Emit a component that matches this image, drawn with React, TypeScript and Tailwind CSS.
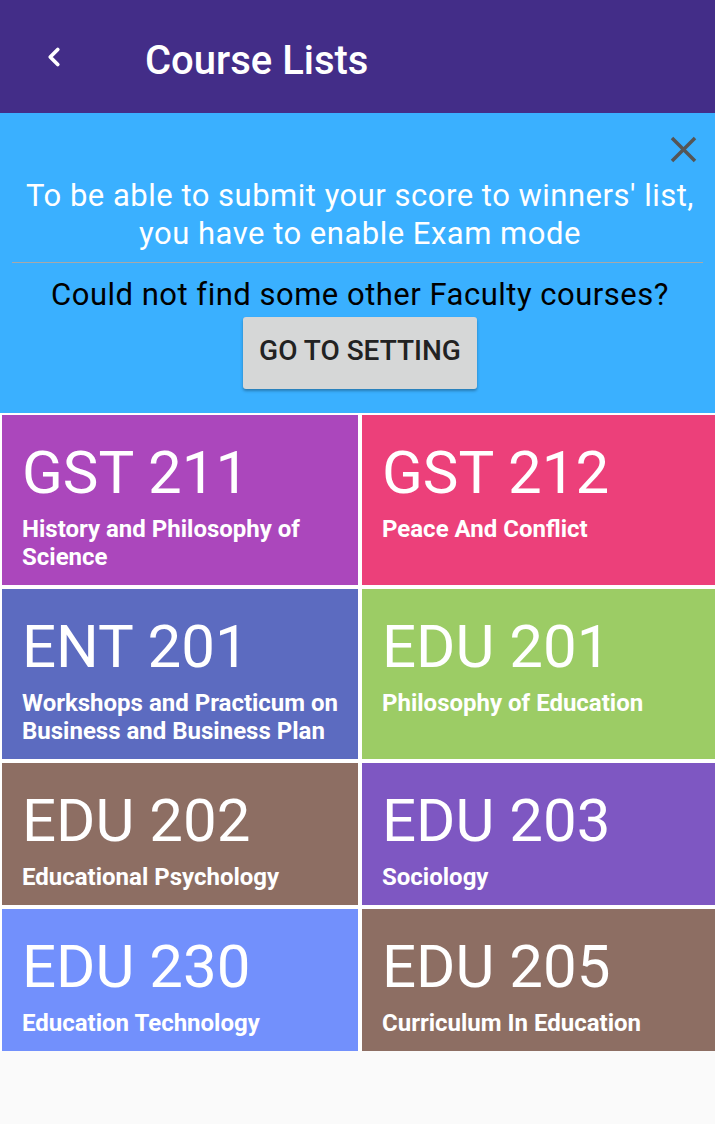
import { ChevronLeft } from "lucide-react"

type Course = { code: string; title: string; color: string }

const courses: Course[] = [
  { code: "GST 211", title: "History and Philosophy of Science", color: "bg-[#ab47bc]" },
  { code: "GST 212", title: "Peace And Conflict", color: "bg-[#ec407a]" },
  { code: "ENT 201", title: "Workshops and Practicum on Business and Business Plan", color: "bg-[#5c6bc0]" },
  { code: "EDU 201", title: "Philosophy of Education", color: "bg-[#9ccc65]" },
  { code: "EDU 202", title: "Educational Psychology", color: "bg-[#8d6e63]" },
  { code: "EDU 203", title: "Sociology", color: "bg-[#7e57c2]" },
  { code: "EDU 230", title: "Education Technology", color: "bg-[#7290fc]" },
  { code: "EDU 205", title: "Curriculum In Education", color: "bg-[#8d6e63]" },
]

function CourseCard({ course }: { course: Course }) {
  return (
    <div className={`${course.color} pl-[20px] pr-3 pt-[27px] pb-[14px] text-white`}>
      <div className="text-[60px] leading-[62px] font-normal">{course.code}</div>
      <div className="mt-[11px] text-[24px] leading-[28px] font-bold">{course.title}</div>
    </div>
  )
}

export default function App() {
  return (
    <div className="min-h-[1124px] w-[715px] overflow-hidden bg-[#fafafa] font-['Roboto',sans-serif]">
      <header className="flex h-[113px] items-center bg-[#432d88] text-white">
        <button className="ml-[39px] flex h-[30px] w-[30px] items-center justify-center">
          <ChevronLeft size={32} strokeWidth={3} />
        </button>
        <h1 className="ml-[76px] mt-[8px] text-[40px] font-medium">Course Lists</h1>
      </header>

      <section className="bg-[#3ab0ff] px-[12px] pb-[24px]">
        <div className="flex justify-end pt-[23px] pr-[6px]">
          <svg width="27" height="27" viewBox="0 0 27 27" className="text-[#555555]">
            <path d="M2 2 L25 25 M25 2 L2 25" stroke="currentColor" strokeWidth="3.5" />
          </svg>
        </div>
        <p className="mt-[14px] pl-[5px] text-center text-[31px] leading-[38px] tracking-[0.5px] text-white">
          To be able to submit your score to winners' list,
          <br />
          you have to enable Exam mode
        </p>
        <div className="mt-[9px] h-px bg-[#a8a8a8]" />
        <p className="mt-[14px] pl-[5px] text-center text-[31px] leading-[36px] tracking-[0.5px] text-black">
          Could not find some other Faculty courses?
        </p>
        <div className="mt-[4px] flex justify-center pl-[5px]">
          <button className="h-[72px] w-[234px] rounded-[3px] bg-[#d6d7d7] pb-[4px] text-[28px] font-medium text-[#222222] shadow-[0_2px_3px_rgba(0,0,0,0.3)]">
            GO TO SETTING
          </button>
        </div>
      </section>

      <div className="grid grid-cols-[356px_356px] gap-x-[4px] gap-y-[4px] bg-white px-[2px] pt-[2px]">
        {courses.map((c) => (
          <CourseCard key={c.code} course={c} />
        ))}
      </div>
    </div>
  )
}
